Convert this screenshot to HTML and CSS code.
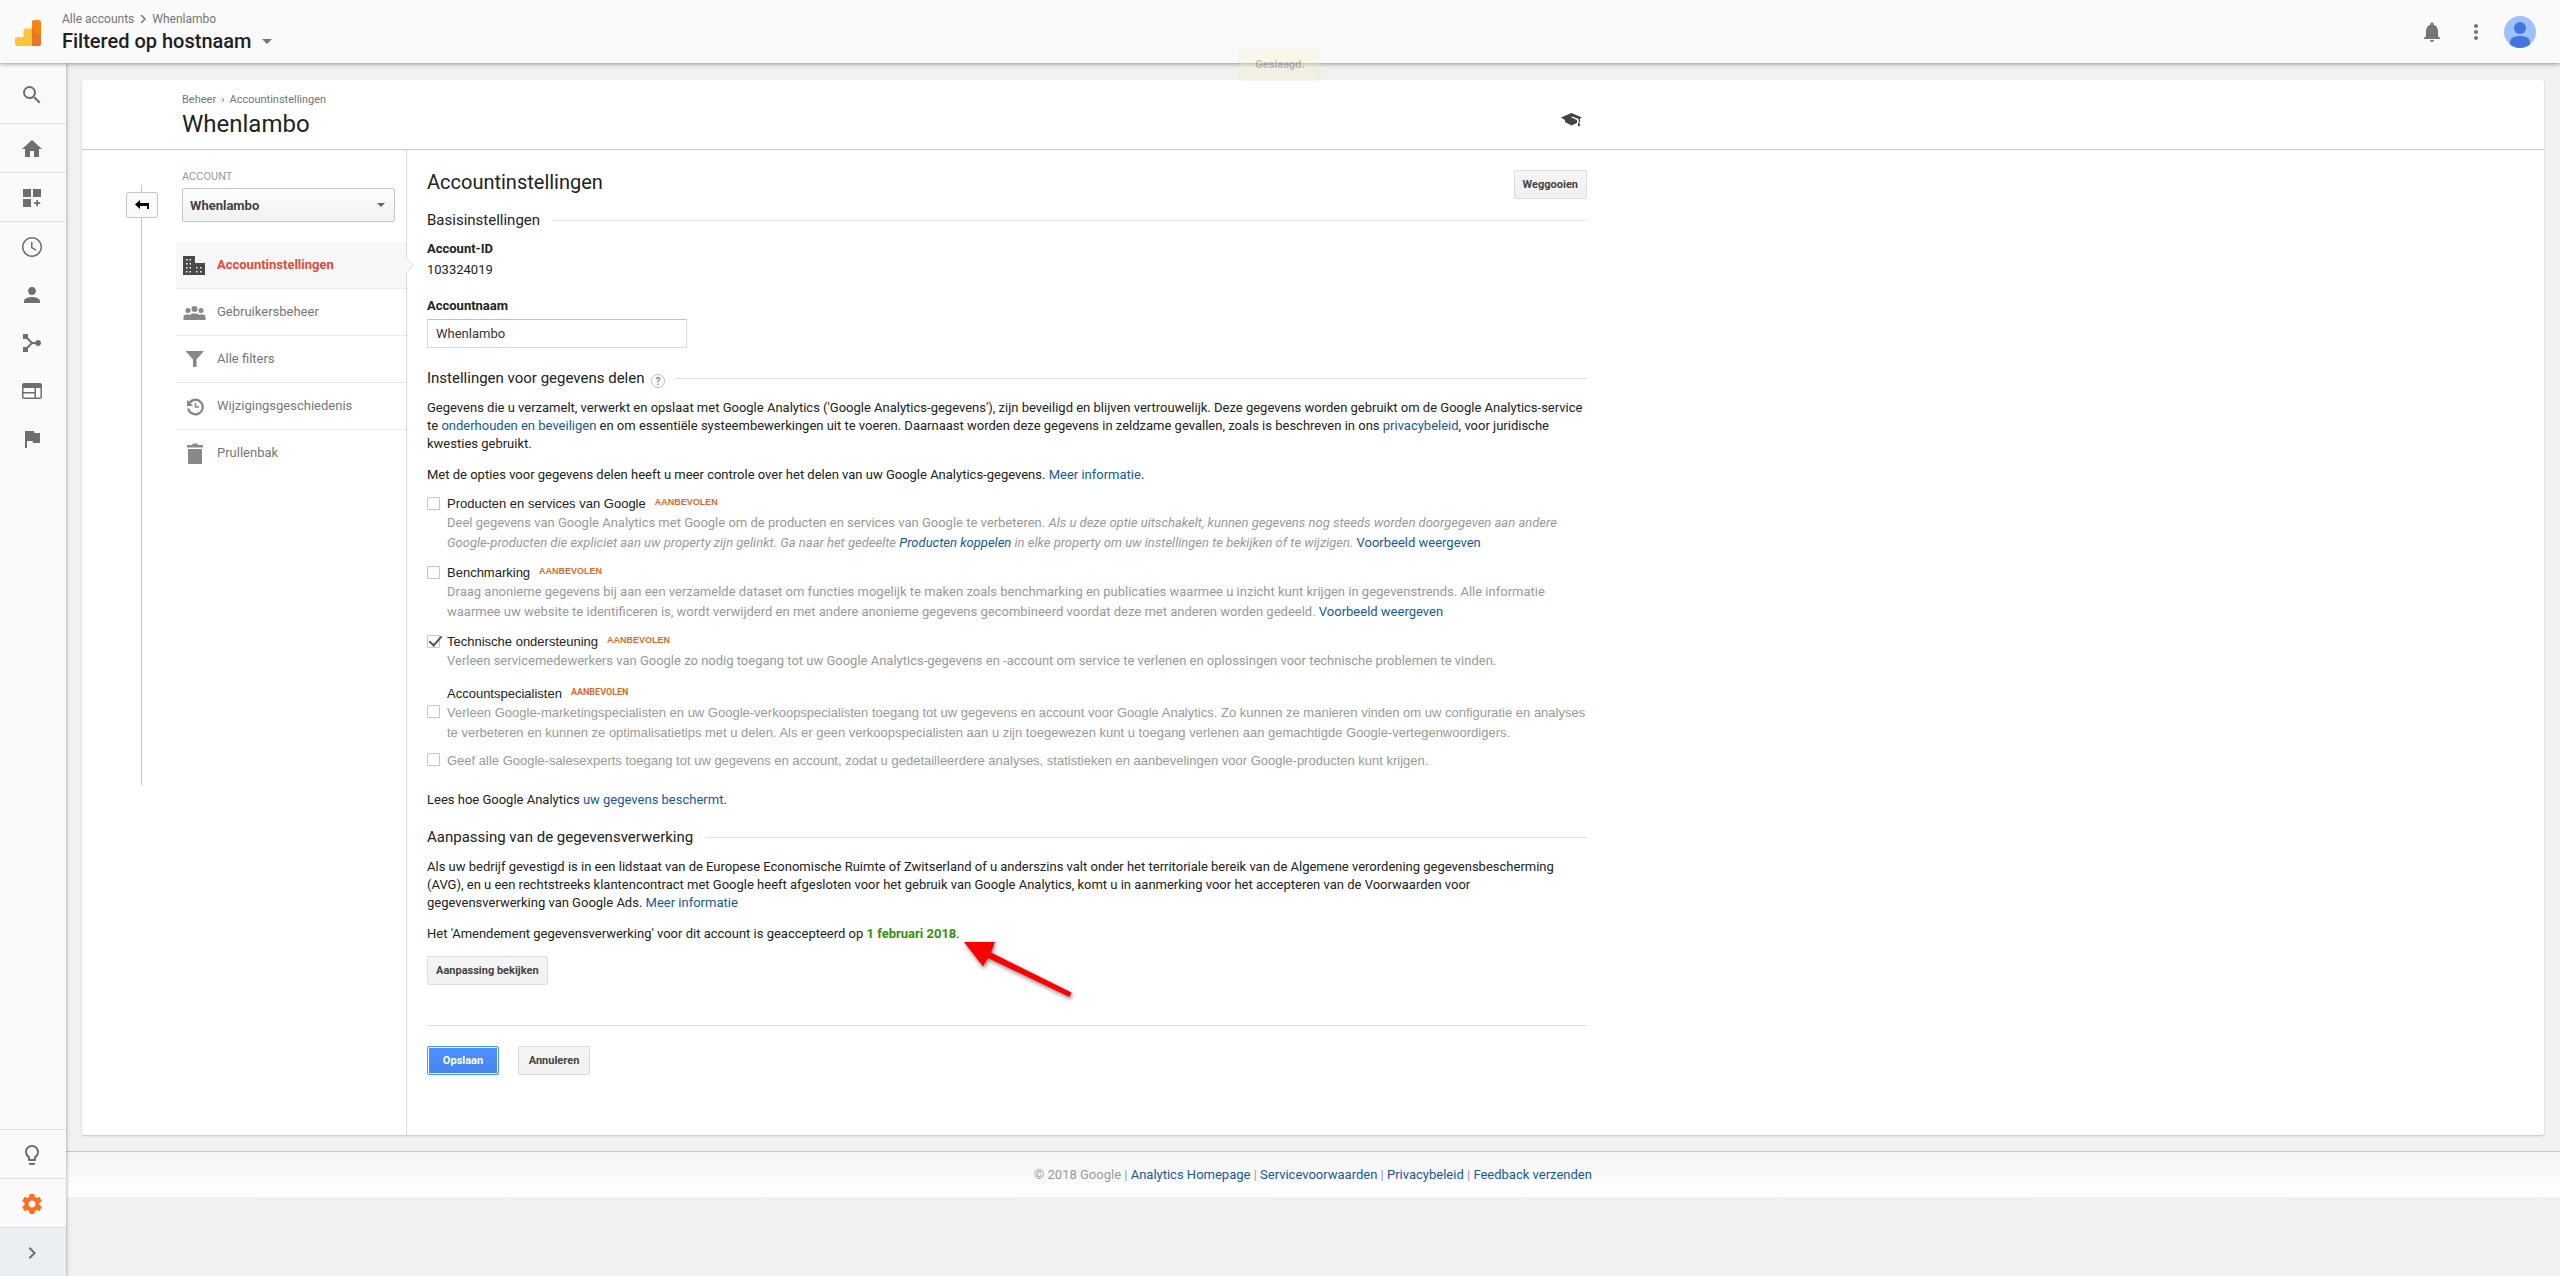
FILE: index.html
```html
<!DOCTYPE html>
<html lang="nl">
<head>
<meta charset="utf-8">
<title>Accountinstellingen</title>
<link rel="stylesheet" href="styles.css">
</head>
<body>
<header class="topbar">
  <svg class="logo" viewBox="0 0 26 26" width="26" height="26" aria-hidden="true">
    <path fill="#f57c00" fill-opacity=".92" d="M17 2a2 2 0 0 1 2-2h5a2 2 0 0 1 2 2v22a2 2 0 0 1-2 2h-7z"/>
    <path fill="#ffc53a" d="M17 8.500h-6.500a2 2 0 0 0-2 2V17H2a2 2 0 0 0-2 2v5a2 2 0 0 0 2 2h15z"/>
    <path fill="#e8702a" d="M17 8.500l9 8V24a2 2 0 0 1-2 2h-7z" fill-opacity=".8"/>
  </svg>
  <div class="topbar-titles">
    <div class="crumbs"><a href="#">Alle accounts</a><svg viewBox="0 0 6 8" width="6" height="8"><path d="M1 0l4 4-4 4" fill="none" stroke="#757575" stroke-width="1.500"/></svg><a href="#">Whenlambo</a></div>
    <button class="view-picker" type="button">Filtered op hostnaam<svg viewBox="0 0 10 5" width="10" height="5"><path fill="#757575" d="M0 0h10L5 5z"/></svg></button>
  </div>
  <div class="topbar-tools">
    <button class="icon-button" type="button" aria-label="Meldingen"><svg viewBox="0 0 24 24" width="24" height="24"><path d="M12 22c1.100 0 2-.9 2-2h-4c0 1.100.89 2 2 2zm6-6v-5c0-3.070-1.640-5.640-4.500-6.320V4c0-.83-.67-1.500-1.500-1.500s-1.500.67-1.500 1.500v.68C7.630 5.360 6 7.920 6 11v5l-2 2v1h16v-1l-2-2z"/></svg></button>
    <button class="icon-button" type="button" aria-label="Meer"><svg viewBox="0 0 24 24" width="24" height="24"><path d="M12 8c1.100 0 2-.9 2-2s-.9-2-2-2-2 .9-2 2 .9 2 2 2zm0 2c-1.100 0-2 .9-2 2s.9 2 2 2 2-.9 2-2-.9-2-2-2zm0 6c-1.100 0-2 .9-2 2s.9 2 2 2 2-.9 2-2-.9-2-2-2z"/></svg></button>
    <button class="icon-button avatar" type="button" aria-label="Account"><svg viewBox="0 0 32 32" width="32" height="32"><circle cx="16" cy="16" r="16" fill="#9fc1ff"/><circle cx="16" cy="12" r="6" fill="#4374e0"/><path fill="#4374e0" d="M6 28.500V26c0-4 4.500-6 10-6s10 2 10 6v2.500A16 16 0 0 1 16 32 16 16 0 0 1 6 28.500z"/></svg></button>
  </div>
</header>
<div class="toast" role="status">Geslaagd.</div>

<div class="shell">
  <nav class="sidebar" aria-label="Hoofdmenu">
    <a class="side-item search" href="#" aria-label="Zoeken"><svg viewBox="0 0 24 24"><path d="M15.500 14h-.79l-.28-.27A6.471 6.471 0 0 0 16 9.500 6.500 6.500 0 1 0 9.500 16c1.610 0 3.090-.59 4.230-1.570l.27.28v.79l5 4.990L20.490 19l-4.990-5zm-6 0C7.010 14 5 11.990 5 9.500S7.010 5 9.500 5 14 7.010 14 9.500 11.990 14 9.500 14z"/></svg></a>
    <a class="side-item ruled" href="#" aria-label="Home"><svg viewBox="0 0 24 24"><path d="M10 20v-6h4v6h5v-8h3L12 3 2 12h3v8z"/></svg></a>
    <a class="side-item ruled" href="#" aria-label="Aanpassing"><svg viewBox="0 0 24 24"><path d="M3 3h8v8H3zM13 3h8v8h-8zM3 13h8v8H3zM16.300 14h1.700v2.300h2.300V18H18v2.300h-1.700V18H14v-1.700h2.300z"/></svg></a>
    <a class="side-item ruled" href="#" aria-label="Realtime"><svg viewBox="0 0 24 24"><path d="M11.990 2C6.470 2 2 6.480 2 12s4.470 10 9.990 10C17.520 22 22 17.520 22 12S17.520 2 11.990 2zM12 20.500a8.500 8.500 0 1 1 0-17 8.500 8.500 0 0 1 0 17zM12.500 7H11v6l4.750 2.850.75-1.230-4-2.370z"/></svg></a>
    <a class="side-item" href="#" aria-label="Doelgroep"><svg viewBox="0 0 24 24"><path d="M12 12c2.210 0 4-1.790 4-4s-1.790-4-4-4-4 1.790-4 4 1.790 4 4 4zm0 2c-2.670 0-8 1.340-8 4v2h16v-2c0-2.660-5.330-4-8-4z"/></svg></a>
    <a class="side-item" href="#" aria-label="Acquisitie"><svg viewBox="0 0 24 24"><path d="M3 3h5v3.600L12.400 11h2.800a3 3 0 1 1 0 2h-2.800L8 17.400V21H3v-5h3.600l4-4-4-4H3z"/></svg></a>
    <a class="side-item" href="#" aria-label="Gedrag"><svg viewBox="0 0 24 24"><path d="M20 4H4c-1.100 0-2 .9-2 2v12c0 1.100.9 2 2 2h16c1.100 0 2-.9 2-2V6c0-1.100-.9-2-2-2zm-5.500 14.500h-11v-4h11zm0-5.500h-11V9h11zm6 5.500h-4.500V9h4.500z"/></svg></a>
    <a class="side-item" href="#" aria-label="Conversies"><svg viewBox="0 0 24 24"><path d="M14.400 6L14 4H5v17h2v-7h5.600l.4 2h7V6z"/></svg></a>
    <a class="side-item ruled to-end" href="#" aria-label="Ontdekken"><svg viewBox="0 0 24 24"><path d="M9 21c0 .55.45 1 1 1h4c.55 0 1-.45 1-1v-1H9zm3-19C8.140 2 5 5.140 5 9c0 2.380 1.190 4.470 3 5.740V17c0 .55.45 1 1 1h6c.55 0 1-.45 1-1v-2.260c1.810-1.270 3-3.360 3-5.740 0-3.860-3.140-7-7-7zm2.850 11.100l-.85.6V16h-4v-2.300l-.85-.6A4.997 4.997 0 0 1 7 9c0-2.760 2.240-5 5-5s5 2.240 5 5c0 1.630-.8 3.160-2.150 4.100z"/></svg></a>
    <a class="side-item ruled current" href="#" aria-label="Beheer"><svg viewBox="0 0 24 24"><path d="M19.430 12.980c.04-.32.07-.64.07-.98s-.03-.66-.07-.98l2.110-1.650c.19-.15.24-.42.12-.64l-2-3.460c-.12-.22-.39-.3-.61-.22l-2.490 1c-.52-.4-1.080-.73-1.690-.98l-.38-2.650A.488.488 0 0 0 14 2h-4c-.25 0-.46.18-.49.42l-.38 2.650c-.61.25-1.170.59-1.690.98l-2.490-1c-.23-.09-.49 0-.61.22l-2 3.460c-.13.22-.07.49.12.64l2.110 1.650c-.04.32-.07.65-.07.98s.03.66.07.98l-2.110 1.650c-.19.15-.24.42-.12.64l2 3.460c.12.22.39.3.61.22l2.490-1c.52.4 1.080.73 1.690.98l.38 2.650c.03.24.24.42.49.42h4c.25 0 .46-.18.49-.42l.38-2.650c.61-.25 1.170-.59 1.690-.98l2.490 1c.23.09.49 0 .61-.22l2-3.460c.12-.22.07-.49-.12-.64zM12 15.500c-1.930 0-3.500-1.570-3.500-3.500s1.570-3.500 3.500-3.500 3.500 1.570 3.500 3.500-1.570 3.500-3.500 3.500z"/></svg></a>
    <a class="side-item ruled expand" href="#" aria-label="Uitvouwen"><svg viewBox="0 0 24 24"><path d="M10 6L8.590 7.410 13.170 12l-4.580 4.590L10 18l6-6z"/></svg></a>
  </nav>

  <div class="page">
    <main class="card">
      <div class="card-head">
        <div class="card-titles">
          <div class="card-crumbs"><a href="#">Beheer</a><span>›</span><a href="#">Accountinstellingen</a></div>
          <h1>Whenlambo</h1>
        </div>
        <a class="learn" href="#" aria-label="Leren"><svg viewBox="0 0 21 14" width="21" height="14"><path fill="#444" d="M10.500 0L21 4.500l-2 1V9h-.8l1 4h-2.400l.7-4h.2V6L11 3.500l-1 .8L16 7v3l-5.500 2.500L4 9V7L0 4.500z"/></svg></a>
      </div>
      <div class="card-body">
        <div class="rail">
          <button class="back" type="button" aria-label="Terug"><svg viewBox="0 0 14 10" width="14" height="10"><path d="M5 0v3h9v6h-2V6H5v3L0 4.500z"/></svg></button>
        </div>
        <div class="admin-nav">
          <label class="admin-label" for="account">ACCOUNT</label>
          <div class="select-box"><select id="account"><option>Whenlambo</option></select></div>
          <nav class="admin-list" aria-label="Account">
            <a class="active" href="#"><svg viewBox="0 0 24 24"><path fill-rule="evenodd" d="M1 2h12v7h10v12H1zM4 5v1.500h1.500V5zm3.500 0v1.500H9V5zM4 9v1.500h1.500V9zm3.500 0v1.500H9V9zM4 13v1.500h1.500V13zm3.500 0v1.500H9V13zM4 17v1.500h1.500V17zm3.500 0v1.500H9V17zm6.500-4v1.500h1.500V13zm4 0v1.500h1.500V13zm-4 4v1.500h1.500V17zm4 0v1.500h1.500V17z"/></svg>Accountinstellingen</a>
            <a href="#"><svg viewBox="0 0 24 24"><circle cx="6" cy="9.500" r="2.500"/><circle cx="12.500" cy="8" r="3"/><circle cx="19" cy="9.500" r="2.500"/><path d="M1.500 19v-3.500c0-1.500 1.500-2 4-2 1 0 2 0 2.500.3 1-.8 2.500-1.300 4.500-1.300s3.500.5 4.500 1.300c.5-.3 1.500-.3 2.500-.3 2.500 0 4 .5 4 2V19z"/></svg>Gebruikersbeheer</a>
            <a href="#"><svg viewBox="0 0 24 24"><path d="M3.500 3h18.500l-7.500 8.500V19h-3.500v-7.500z"/></svg>Alle filters</a>
            <a href="#"><svg viewBox="0 0 24 24"><path d="M13.500 3.500a8.500 8.500 0 0 0-6.600 3.200L5 4.800V11h6.200L8.600 8.400a6.100 6.100 0 1 1-1.100 5H5A8.500 8.500 0 1 0 13.500 3.500zM12.700 8v4.800h4.300v-1.500h-2.700V8z"/></svg>Wijzigingsgeschiedenis</a>
            <a href="#"><svg viewBox="0 0 24 24"><path d="M6 7h14v15H6zM5 3h5l1-1.500h4L16 3h5v2.500H5z"/></svg>Prullenbak</a>
          </nav>
        </div>

        <form class="settings">
          <div class="title-row">
            <h2>Accountinstellingen</h2>
            <button class="btn" type="button">Weggooien</button>
          </div>
          <h3 class="section-first">Basisinstellingen</h3>
          <div class="field-name">Account-ID</div>
          <div class="field-value">103324019</div>
          <label class="field-name spaced" for="name">Accountnaam</label>
          <input class="text-input" id="name" type="text" value="Whenlambo">

          <h3 class="section-sharing">Instellingen voor gegevens delen <svg viewBox="0 0 14 14" width="14" height="14"><circle cx="7" cy="7" r="6.500" fill="none" stroke="#bbb"/><text x="7" y="11" text-anchor="middle" class="help-mark">?</text></svg></h3>
          <p>Gegevens die u verzamelt, verwerkt en opslaat met Google Analytics ('Google Analytics-gegevens'), zijn beveiligd en blijven vertrouwelijk. Deze gegevens worden gebruikt om de Google Analytics-service te <a href="#">onderhouden en beveiligen</a> en om essentiële systeembewerkingen uit te voeren. Daarnaast worden deze gegevens in zeldzame gevallen, zoals is beschreven in ons <a href="#">privacybeleid</a>, voor juridische kwesties gebruikt.</p>
          <p>Met de opties voor gegevens delen heeft u meer controle over het delen van uw Google Analytics-gegevens. <a href="#">Meer informatie</a>.</p>

          <div class="options">
            <div class="option">
              <input type="checkbox" id="o1">
              <div><label for="o1">Producten en services van Google</label><span class="tag">AANBEVOLEN</span>
              <div class="desc">Deel gegevens van Google Analytics met Google om de producten en services van Google te verbeteren. <em>Als u deze optie uitschakelt, kunnen gegevens nog steeds worden doorgegeven aan andere Google-producten die expliciet aan uw property zijn gelinkt. Ga naar het gedeelte <a class="strong" href="#">Producten koppelen</a> in elke property om uw instellingen te bekijken of te wijzigen.</em> <a href="#">Voorbeeld weergeven</a></div></div>
            </div>
            <div class="option">
              <input type="checkbox" id="o2">
              <div><label for="o2">Benchmarking</label><span class="tag">AANBEVOLEN</span>
              <div class="desc">Draag anonieme gegevens bij aan een verzamelde dataset om functies mogelijk te maken zoals benchmarking en publicaties waarmee u inzicht kunt krijgen in gegevenstrends. Alle informatie waarmee uw website te identificeren is, wordt verwijderd en met andere anonieme gegevens gecombineerd voordat deze met anderen worden gedeeld. <a href="#">Voorbeeld weergeven</a></div></div>
            </div>
            <div class="option">
              <input type="checkbox" id="o3" checked>
              <div><label for="o3">Technische ondersteuning</label><span class="tag">AANBEVOLEN</span>
              <div class="desc">Verleen servicemedewerkers van Google zo nodig toegang tot uw Google Analytics-gegevens en -account om service te verlenen en oplossingen voor technische problemen te vinden.</div></div>
            </div>
          </div>

          <div class="specialists">
            <div class="specialists-title">Accountspecialisten<span class="tag narrow">AANBEVOLEN</span></div>
            <div class="option">
              <input type="checkbox" id="o4">
              <label class="plain-desc" for="o4">Verleen Google-marketingspecialisten en uw Google-verkoopspecialisten toegang tot uw gegevens en account voor Google Analytics. Zo kunnen ze manieren vinden om uw configuratie en analyses te verbeteren en kunnen ze optimalisatietips met u delen. Als er geen verkoopspecialisten aan u zijn toegewezen kunt u toegang verlenen aan gemachtigde Google-vertegenwoordigers.</label>
            </div>
            <div class="option">
              <input type="checkbox" id="o5">
              <label class="plain-desc" for="o5">Geef alle Google-salesexperts toegang tot uw gegevens en account, zodat u gedetailleerdere analyses, statistieken en aanbevelingen voor Google-producten kunt krijgen.</label>
            </div>
          </div>
          <p class="protect">Lees hoe Google Analytics <a href="#">uw gegevens beschermt</a>.</p>

          <h3 class="section-amend">Aanpassing van de gegevensverwerking</h3>
          <p>Als uw bedrijf gevestigd is in een lidstaat van de Europese Economische Ruimte of Zwitserland of u anderszins valt onder het territoriale bereik van de Algemene verordening gegevensbescherming (AVG), en u een rechtstreeks klantencontract met Google heeft afgesloten voor het gebruik van Google Analytics, komt u in aanmerking voor het accepteren van de Voorwaarden voor gegevensverwerking van Google Ads. <a href="#">Meer informatie</a></p>
          <p>Het 'Amendement gegevensverwerking' voor dit account is geaccepteerd op <span class="accepted">1 februari 2018<svg class="arrow" viewBox="0 0 120 70" width="120" height="70" aria-hidden="true"><path fill="#fb0000" d="M4 4h31l-4 10.500L111.500 54.500l-2 4.500L28 20l-5 8.500z"/></svg></span>.</p>
          <button class="btn" type="button">Aanpassing bekijken</button>
          <hr>
          <div class="actions">
            <button class="btn primary" type="submit">Opslaan</button>
            <button class="btn" type="button">Annuleren</button>
          </div>
        </form>
      </div>
    </main>
    <footer class="footer">© 2018 Google | <a href="#">Analytics Homepage</a> | <a href="#">Servicevoorwaarden</a> | <a href="#">Privacybeleid</a> | <a href="#">Feedback verzenden</a></footer>
  </div>
</div>
</body>
</html>
```
FILE: styles.css
```css
* { box-sizing: border-box; }

body {
  margin: 0;
  min-height: 100vh;
  display: flex;
  flex-direction: column;
  background: #f1f1f1;
  color: #222;
  font: 13px/18px Roboto, "Liberation Sans", sans-serif;
}

a { color: #15599c; text-decoration: none; }
h1, h2, h3, p { margin: 0; font-weight: 400; }
button, input, select { font-family: inherit; }

/* top bar */
.topbar {
  position: relative;
  z-index: 2;
  display: flex;
  align-items: center;
  height: 63px;
  padding: 0 24px 0 15px;
  background: #fafafa;
  box-shadow: 0 1px 4px rgba(0, 0, 0, .4);
}
.logo { margin-top: 3px; }
.topbar-titles { margin-left: 21px; padding-top: 1px; }
.crumbs { display: flex; align-items: center; gap: 6px; font-size: 12px; line-height: 18px; }
.crumbs a { color: #757575; }
.view-picker {
  display: flex;
  align-items: center;
  gap: 10px;
  padding: 0;
  border: 0;
  background: none;
  color: #212121;
  font-size: 20px;
  font-weight: 500;
  line-height: 26px;
}
.topbar-tools { display: flex; align-items: center; gap: 20px; margin-left: auto; }
.icon-button { display: flex; padding: 0; border: 0; background: none; fill: #757575; }
.avatar { margin-left: -4px; }

.toast {
  position: absolute;
  z-index: 3;
  top: 49px;
  left: 50%;
  transform: translateX(-50%);
  padding: 6px 15px;
  border: 1px solid #e0d8b0;
  border-radius: 2px;
  background: #f9edbe;
  font-size: 11px;
  font-weight: 700;
  opacity: .25;
}

.shell { display: flex; flex: 1; }

/* icon sidebar */
.sidebar {
  z-index: 1;
  display: flex;
  flex-direction: column;
  flex: none;
  width: 66px;
  background: #fafafa;
  box-shadow: 0 0 4px rgba(0, 0, 0, .4);
}
.side-item { display: flex; align-items: center; justify-content: center; height: 48px; padding: 2px 2px 0 0; }
.side-item svg { width: 24px; height: 24px; fill: #6e6e6e; }
.search { height: 60px; padding-top: 4px; }
.ruled { height: 49px; border-top: 1px solid #e0e0e0; }
.to-end { margin-top: auto; }
.current svg { fill: #ff6f22; }
.expand { background: #eceff1; }

/* page and card */
.page { flex: 1; min-width: 0; }
.card {
  margin: 17px 16px 16px;
  background: #fff;
  border-radius: 2px;
  box-shadow: 0 1px 2px rgba(0, 0, 0, .2);
}
.card-head {
  display: flex;
  align-items: center;
  height: 70px;
  padding: 2px 0 0 100px;
  border-bottom: 1px solid #c8c8c8;
}
.card-titles { flex: 0 1 1379px; }
.card-crumbs { display: flex; gap: 5px; font-size: 11px; line-height: 16px; }
.card-crumbs, .card-crumbs a { color: #757575; }
h1 { font-size: 24px; line-height: 32px; }
.learn { display: flex; padding-top: 8px; }
.card-body { display: flex; }

/* vertical rail with the back button on it */
.rail {
  display: flex;
  justify-content: center;
  flex: none;
  width: 94px;
  height: 600px;
  margin-top: 35px;
  padding: 7px 0 0 26px;
  background: linear-gradient(#c6c6c6, #c6c6c6) 59px 0 / 1px 100% no-repeat;
}
.back {
  display: flex;
  align-items: center;
  justify-content: center;
  flex: none;
  width: 32px;
  height: 26px;
  padding: 0;
  border: 1px solid #c6c6c6;
  border-radius: 2px;
  background: #fafafa;
}

.admin-nav { flex: none; width: 231px; padding-top: 18px; border-right: 1px solid #d8d8d8; }
.admin-label { display: block; margin-left: 6px; color: #999; font-size: 11px; }
.select-box { position: relative; width: 213px; margin: 2px 0 20px 6px; }
.select-box select {
  display: block;
  width: 100%;
  height: 34px;
  padding: 0 7px;
  appearance: none;
  border: 1px solid #c6c6c6;
  border-radius: 2px;
  background: linear-gradient(#fff, #f1f1f1);
  color: #444;
  font-size: 13px;
  font-weight: 700;
}
.select-box::after {
  content: "";
  position: absolute;
  right: 10px;
  top: 15px;
  border: 4px solid transparent;
  border-top-color: #666;
  border-bottom: 0;
}
.admin-list a {
  position: relative;
  display: flex;
  align-items: center;
  gap: 11px;
  height: 47px;
  padding-left: 6px;
  border-bottom: 1px solid #ebebeb;
  color: #777;
}
.admin-list a:last-child { border-bottom-color: transparent; }
.admin-list svg { width: 24px; height: 24px; margin-top: 2px; fill: #888; }
.admin-list .active { background: #f7f7f7; color: #dd4b39; font-weight: 700; }
.admin-list .active svg { fill: #4a4a4a; }
.admin-list .active::after {
  content: "";
  position: absolute;
  right: -6px;
  top: 18px;
  width: 10px;
  height: 10px;
  border: solid #e2e2e2;
  border-width: 1px 1px 0 0;
  background: linear-gradient(45deg, transparent 50%, #fafafa 50%);
  transform: rotate(45deg);
}

/* settings form */
.settings { flex: 0 1 1200px; padding: 20px 20px 60px; }
.title-row { display: flex; justify-content: space-between; align-items: flex-start; }
h2 { font-size: 20px; line-height: 24px; }
h3 { display: flex; align-items: center; font-size: 15px; line-height: 20px; }
h3::after { content: ""; flex: 1; height: 1px; margin-left: 13px; background: #e0e0e0; }
h3 svg { margin: 5px -3px 0 7px; }
.help-mark { fill: #888; font-size: 10px; font-weight: 700; }
.section-first { margin: 11px 0 10px; }
.field-name { display: block; margin-bottom: 3px; font-weight: 700; }
.spaced { margin: 18px 0 4px; }
.text-input {
  display: block;
  width: 260px;
  height: 29px;
  padding: 0 8px;
  border: 1px solid #d9d9d9;
  border-top-color: #c0c0c0;
  color: #333;
  font-size: 13px;
}
.section-sharing { margin: 20px 0 11px; }
p { margin-bottom: 13px; }

.btn {
  height: 29px;
  padding: 0 8px;
  border: 1px solid #dcdcdc;
  border-radius: 2px;
  background: linear-gradient(#f5f5f5, #f1f1f1);
  color: #444;
  font-size: 11px;
  font-weight: 700;
  white-space: nowrap;
}

.options { display: grid; gap: 11px; margin-top: -2px; }
.option { display: flex; gap: 7px; }
.option label, .specialists-title { font-family: "Liberation Sans", Arial, sans-serif; }
.option input {
  position: relative;
  flex: none;
  width: 13px;
  height: 13px;
  margin: 2px 0 0;
  appearance: none;
  border: 1px solid #c6c6c6;
  border-radius: 1px;
  background: #fff;
}
.option input:checked::after {
  content: "";
  position: absolute;
  left: 4px;
  top: -3px;
  width: 5px;
  height: 11px;
  border: solid #555;
  border-width: 0 2px 2px 0;
  transform: rotate(42deg);
}
.tag {
  margin-left: 9px;
  color: #dd6b2d;
  font: 700 9px/12px "Liberation Sans", Arial, sans-serif;
  vertical-align: 3px;
}
.narrow { font-family: Roboto, sans-serif; }
.desc, .option .plain-desc { color: #999; line-height: 20px; }
.desc em { font-style: oblique 14deg; }
.specialists { margin-top: 14px; }
.specialists-title { margin-left: 20px; }
.specialists .option + .option { margin-top: 8px; }
.protect { margin: 20px 0 18px; }
.section-amend { margin-bottom: 11px; }
.accepted { position: relative; color: #388e0e; font-weight: 700; }
.arrow {
  position: absolute;
  left: 100%;
  top: 12px;
  margin-left: 4px;
  filter: drop-shadow(1px 2px 2px rgba(0, 0, 0, .5));
}
hr { height: 1px; margin: 40px 0 20px; border: 0; background: #e0e0e0; }
.actions { display: flex; gap: 19px; }
.actions .btn { width: 72px; }
.actions .primary {
  border-color: #4d90fe;
  background: linear-gradient(#4d90fe, #4787ed);
  box-shadow: inset 0 0 0 1px #fff;
  color: #fff;
}

.footer {
  padding: 14px 0 13px;
  border-top: 1px solid #c8c8c8;
  background: linear-gradient(#f4f4f4, #fff);
  color: #999;
  text-align: center;
}
```
